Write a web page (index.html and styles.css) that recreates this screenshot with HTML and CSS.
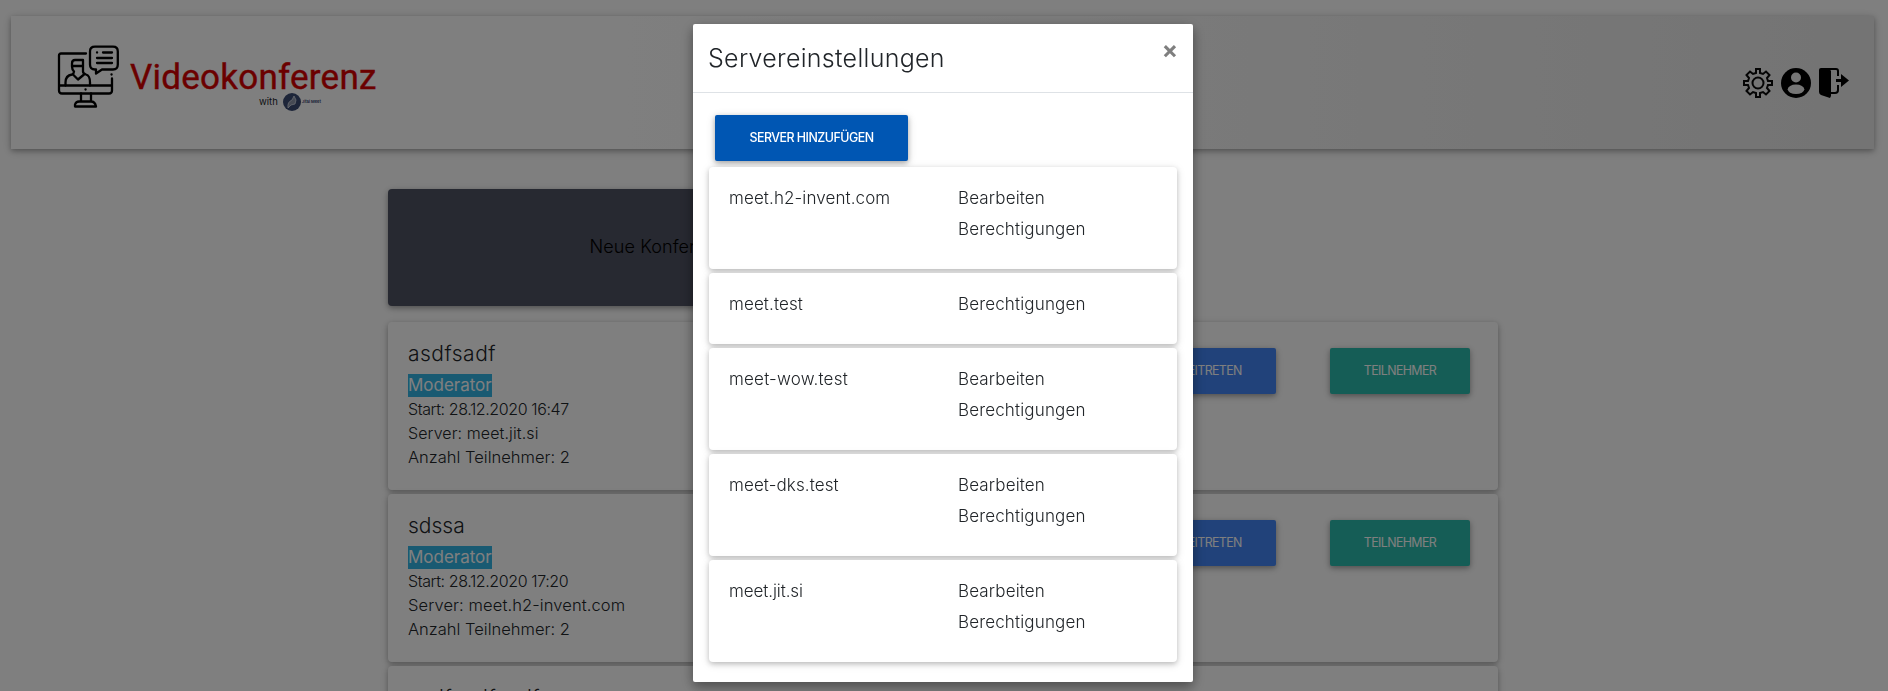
FILE: index.html
```html
<!DOCTYPE html>
<html lang="de">
<head>
<meta charset="utf-8">
<title>Videokonferenz</title>
<link rel="stylesheet" href="styles.css">
</head>
<body>
<header class="topbar">
  <div class="brand">
    <svg class="brand-icon" viewBox="0 0 62 62" fill="none" stroke="#000" stroke-width="2.300" stroke-linecap="round" stroke-linejoin="round">
      <path d="M29 8H4Q2 8 2 10V45Q2 48 5 48H52Q55 48 55 45V33M2 40H55"/>
      <path d="M38 1.200H56Q60.800 1.200 60.800 6V19Q60.800 24 56 24H45L39 28V24H38Q33 24 33 19V6Q33 1.200 38 1.200Z"/>
      <path d="M46 7H55M40 12.500H55M40 17.500H55M40 7H40.100M54.500 29H54.600M28.500 44H28.600"/>
      <path d="M8.500 40V37Q8.500 30 15 29Q17 28 17 26Q15 24 15 21V18Q15 14.500 18 14.500H26V26Q26 28 29 29Q33 30 33 37V40M15 20.500H26M16 29L21 34L27 29"/>
      <path d="M24 48V56M34 48V56M18 61V59Q19 56 22 56H34Q38 56 39 61Z"/>
    </svg>
    <div class="brand-text">
      <span class="brand-name">Videokonferenz</span>
      <span class="brand-sub"><span class="brand-with">with</span>
        <svg class="brand-mark" viewBox="0 0 18 18"><circle cx="9" cy="9" r="9" fill="#3a4a73"/><path d="M5 15Q4 9 9 7L11 3L13 7L12 11L8 12Z" fill="#8c94a8" stroke="#e0e4ee" stroke-width=".7"/></svg>
        <span class="brand-jitsi">Jitsi Meet</span></span>
    </div>
  </div>
  <nav class="tools">
    <svg viewBox="0 0 30 30" fill="none" stroke="#0a0a0a" stroke-width="2"><path d="M13 1H17V5L20 6L23 3.500L26.500 7L24 10L25 13H29V17H25L24 20L26.500 23L23 26.500L20 24L17 25V29H13V25L10 24L7 26.500L3.500 23L6 20L5 17H1V13H5L6 10L3.500 7L7 3.500L10 6L13 5Z"/><circle cx="15" cy="15" r="5.500"/></svg>
    <svg viewBox="0 0 30 30"><circle cx="15" cy="15" r="15"/><circle cx="15" cy="9.500" r="5" fill="#ececec"/><ellipse cx="15" cy="21.300" rx="8.300" ry="4.800" fill="#ececec"/></svg>
    <svg viewBox="0 0 30 30"><path d="M2 0H10L12 3V28L11 30L2 27Q0 26 0 24V2Q0 0 2 0Z"/><path d="M7 1H17Q19 1 19 3V8M19 17V22Q19 25 16 25H12" fill="none" stroke="#000" stroke-width="2"/><path d="M17 11H22V6L30 12.500L22 19V14H17Z"/></svg>
  </nav>
</header>
<main class="container">
  <a class="new-conf">Neue Konferenz</a>
  <section class="room">
    <div class="info"><h5>asdfsadf</h5><p><span class="tag">Moderator</span></p><p class="start">Start: 28.12.2020 16:47</p><p class="host">Server: meet.jit.si</p><p class="count">Anzahl Teilnehmer: 2</p></div>
    <div class="actions"><a class="btn join">Beitreten</a><a class="btn people">Teilnehmer</a></div>
  </section>
  <section class="room">
    <div class="info"><h5 class="snug">sdssa</h5><p><span class="tag">Moderator</span></p><p class="start">Start: 28.12.2020 17:20</p><p class="host wide">Server: meet.h2-invent.com</p><p class="count">Anzahl Teilnehmer: 2</p></div>
    <div class="actions"><a class="btn join">Beitreten</a><a class="btn people">Teilnehmer</a></div>
  </section>
  <section class="room">
    <div class="info"><h5>asdfasdfasdf</h5></div>
  </section>
</main>
<div class="backdrop">
  <div class="modal">
    <div class="modal-head"><h4>Servereinstellungen</h4><span class="close">×</span></div>
    <div class="modal-body">
      <a class="btn add">Server hinzufügen</a>
      <div class="server"><span>meet.h2-invent.com</span><div class="links"><span>Bearbeiten</span><span>Berechtigungen</span></div></div>
      <div class="server"><span>meet.test</span><div class="links"><span>Berechtigungen</span></div></div>
      <div class="server"><span class="wide">meet-wow.test</span><div class="links"><span>Bearbeiten</span><span>Berechtigungen</span></div></div>
      <div class="server"><span>meet-dks.test</span><div class="links"><span>Bearbeiten</span><span>Berechtigungen</span></div></div>
      <div class="server"><span class="snug">meet.jit.si</span><div class="links"><span>Bearbeiten</span><span>Berechtigungen</span></div></div>
    </div>
  </div>
</div>
</body>
</html>
```
FILE: styles.css
```css
* { box-sizing: border-box; }
html, body { height: 100%; overflow: hidden; }
body { margin: 0; padding: 16px 14px 0 11px; background: #fff; color: #212529; font: 300 16px/24px Inter, "Open Sans", sans-serif; }
h4, h5, p { margin: 0; font-weight: 300; }
.topbar { height: 133px; display: flex; justify-content: space-between; padding: 0 25px 0 46px; background: linear-gradient(90deg, #fff 30%, #e8e8e8); box-shadow: 0 2px 5px rgba(0,0,0,.26), 0 2px 10px rgba(0,0,0,.16); }
.brand { display: flex; padding-top: 29px; }
.brand-icon { width: 62px; height: 63px; }
.brand-text { display: flex; flex-direction: column; padding: 13px 0 0 11px; }
.brand-name { font: 400 35px/40px Roboto, sans-serif; color: #d60000; letter-spacing: .240px; -webkit-text-stroke: .4px #d60000; white-space: nowrap; }
.brand-sub { display: flex; align-items: center; margin: -5px 0 0 129px; font-size: 9.500px; line-height: 18px; }
.brand-with { font-weight: 400; margin-right: 5px; }
.brand-mark { width: 18px; height: 18px; }
.brand-jitsi { font-size: 4px; font-weight: 700; color: #3a4a73; margin-left: 1px; }
.tools { display: flex; gap: 8px; padding-top: 52px; }
.tools svg { width: 30px; height: 30px; }
.container { width: 1110px; margin: 40px 0 0 377px; }
.new-conf { display: flex; align-items: center; justify-content: center; width: 540px; height: 117px; margin-bottom: 16px; padding-bottom: 1px; border-radius: 4px; background: #4f5262; color: #000; font-size: 18px; letter-spacing: .1px; box-shadow: 0 2px 5px rgba(0,0,0,.26), 0 2px 10px rgba(0,0,0,.16); }
.room { display: flex; justify-content: space-between; height: 168px; margin-bottom: 4px; padding: 20px 28px 0 20px; border-radius: 4px; background: #fff; box-shadow: 0 2px 5px rgba(0,0,0,.22), 0 2px 10px rgba(0,0,0,.16); }
.info h5 { font-size: 21px; line-height: 24px; margin-bottom: 8px; letter-spacing: .5px; }
.info h5.snug { letter-spacing: 0; }
.tag { display: block; width: 84px; height: 23px; line-height: 23px; background: #33b5e5; color: #fff; font-size: 17px; font-weight: 400; letter-spacing: -.02px; }
.start { letter-spacing: -.4px; }
.host { letter-spacing: .1px; }
.host.wide { font-size: 16.500px; letter-spacing: .1px; }
.count { font-size: 16.500px; letter-spacing: 0; }
.actions { display: flex; gap: 54px; padding-top: 6px; }
.btn { display: flex; align-items: center; justify-content: center; height: 46px; border-radius: 2px; color: #fff; font-size: 12.400px; font-weight: 400; letter-spacing: -.6px; text-transform: uppercase; box-shadow: 0 2px 5px rgba(0,0,0,.26), 0 2px 10px rgba(0,0,0,.16); }
.join { width: 130px; background: #4285f4; }
.people { width: 140px; background: #2bbbad; }
.backdrop { position: fixed; inset: 0; padding-top: 24px; background: rgba(0,0,0,.5); }
.modal { width: 500px; height: 658px; margin-left: 693px; border-radius: 2px; background: #fff; box-shadow: 0 5px 11px rgba(0,0,0,.25), 0 4px 15px rgba(0,0,0,.2); }
.modal-head { display: flex; justify-content: space-between; height: 69px; padding: 16px 15px 16px 15px; border-bottom: 1px solid #dee2e6; }
.modal-head h4 { font-size: 25px; line-height: 36px; letter-spacing: .3px; }
.close { font: 700 24px/20px Inter, sans-serif; color: #7f7f7f; }
.modal-body { padding: 22px 16px 0 15px; }
.add { width: 193px; margin: 0 0 6px 7px; background: #0056b3; font-weight: 500; letter-spacing: -.5px; }
.server { display: grid; grid-template-columns: 229px 1fr; padding: 19px 19px 20px 20px; height: 102px; margin: 0 0 4px 1px; border-radius: 4px; background: #fff; font-size: 17px; letter-spacing: .1px; box-shadow: 0 2px 5px rgba(0,0,0,.18), 0 2px 10px rgba(0,0,0,.13); }
.server .wide { letter-spacing: .2px; }
.server .snug { letter-spacing: -.1px; }
.links { display: flex; flex-direction: column; gap: 7px; letter-spacing: .15px; }
.server:nth-child(3) { height: 71px; }
```
